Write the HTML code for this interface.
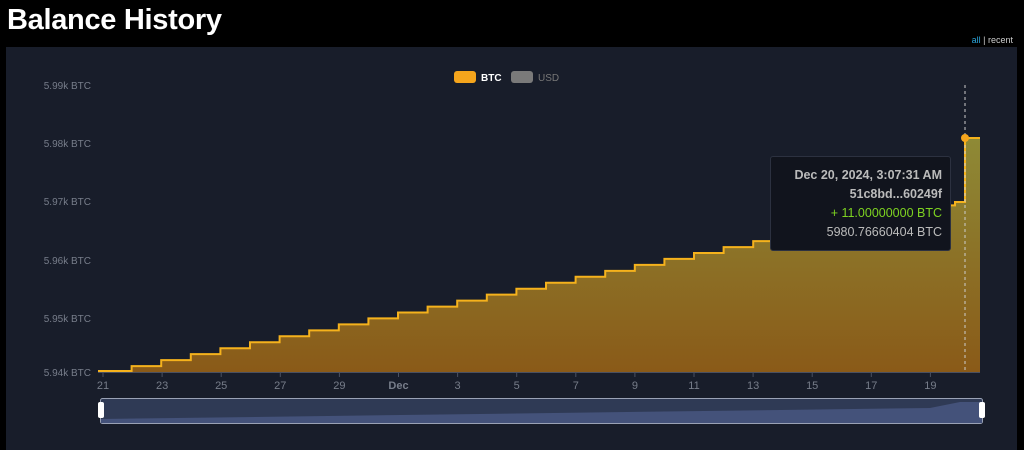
<!DOCTYPE html>
<html><head><meta charset="utf-8"><style>
html,body{margin:0;padding:0;background:#000;width:1024px;height:450px;overflow:hidden;font-family:"Liberation Sans",sans-serif}
h1{position:absolute;left:7px;top:4px;margin:0;color:#fff;font-size:29px;font-weight:bold;letter-spacing:-0.3px}
.links{position:absolute;right:11px;top:35px;font-size:9px;color:#ccc}
.links b{color:#2aa3d9;font-weight:normal}
.panel{position:absolute;left:6px;top:47px;width:1011px;height:403px;background:#181d2a}
.tip{position:absolute;left:770px;top:156px;width:181px;height:95px;background:#11141d;border:1px solid #2c3140;border-radius:3px;box-sizing:border-box;text-align:right;padding:9px 8px 0 0;font-size:12.5px;line-height:19px;color:#bbb}
</style></head><body>
<h1>Balance History</h1>
<div class="links"><b>all</b> | recent</div>
<div class="panel"></div>
<svg id="c" width="1024" height="450" style="position:absolute;left:0;top:0" font-family="Liberation Sans, sans-serif">
<defs><linearGradient id="g" x1="0" y1="0" x2="0" y2="1"><stop offset="0" stop-color="#8e8a36"/><stop offset="1" stop-color="#8a5a18"/></linearGradient></defs>
<g font-size="10" fill="#777d8a" text-anchor="end">
<text x="91" y="89">5.99k BTC</text><text x="91" y="147">5.98k BTC</text><text x="91" y="205">5.97k BTC</text><text x="91" y="264">5.96k BTC</text><text x="91" y="322">5.95k BTC</text><text x="91" y="376">5.94k BTC</text>
</g>
<rect x="454" y="71" width="22" height="12" rx="3" fill="#f5a51c"/><text x="481" y="81" font-size="10" fill="#fff" font-weight="bold">BTC</text>
<rect x="511" y="71" width="22" height="12" rx="3" fill="#7a7a7a"/><text x="538" y="81" font-size="10" fill="#777">USD</text>
<g id="area"></g>
<line x1="98" y1="372.5" x2="980" y2="372.5" stroke="#4a5060"/>
<g id="ticks" font-size="11" fill="#777d8a" text-anchor="middle"></g>
<line x1="965" y1="85" x2="965" y2="372" stroke="#ccc" stroke-dasharray="3,3" stroke-width="1"/>
<circle cx="965" cy="138" r="4" fill="#f5a51c"/>
<rect x="100.5" y="398.5" width="882" height="25" rx="2" fill="#2f3a55" stroke="#9aa2b5"/>
<path d="M101 419 L930 408 L960 402 L982 402 L982 423 L101 423Z" fill="#44527a"/>
<rect x="98" y="402" width="6" height="16" rx="2" fill="#fff"/>
<rect x="979" y="402" width="6" height="16" rx="2" fill="#fff"/>
</svg>
<div class="tip"><b>Dec 20, 2024, 3:07:31 AM</b><br><b>51c8bd...60249f</b><br><span style="color:#7ed321">+ 11.00000000 BTC</span><br>5980.76660404 BTC</div>
<script>
var d="M98 372",a="M98 372";
var pts=[];
for(var i=0;i<29;i++){var x=98+(i===0?0:4+i*29.6);var y=372-i*5.95;if(i==0)y=371;pts.push([x,y]);}
pts.push([955,202]);pts.push([965,138]);
var s="M98 "+pts[0][1];
for(var i=1;i<pts.length;i++){s+=" H"+pts[i][0].toFixed(1)+" V"+pts[i][1].toFixed(1);}
s+=" H980";
var area=s+" V372 H98Z";
document.getElementById('area').innerHTML='<path d="'+area+'" fill="url(#g)"/><path d="'+s+'" fill="none" stroke="#f5b21c" stroke-width="2"/>';
var labs=["21","23","25","27","29","Dec","3","5","7","9","11","13","15","17","19"];
var h="";
for(var i=0;i<labs.length;i++){var x=103+i*59.1;h+='<line x1="'+x+'" y1="372" x2="'+x+'" y2="377" stroke="#4a5060"/><text x="'+x+'" y="389"'+(labs[i]=="Dec"?' font-weight="bold"':'')+'>'+labs[i]+'</text>';}
document.getElementById('ticks').innerHTML=h;
</script>
</body></html>
